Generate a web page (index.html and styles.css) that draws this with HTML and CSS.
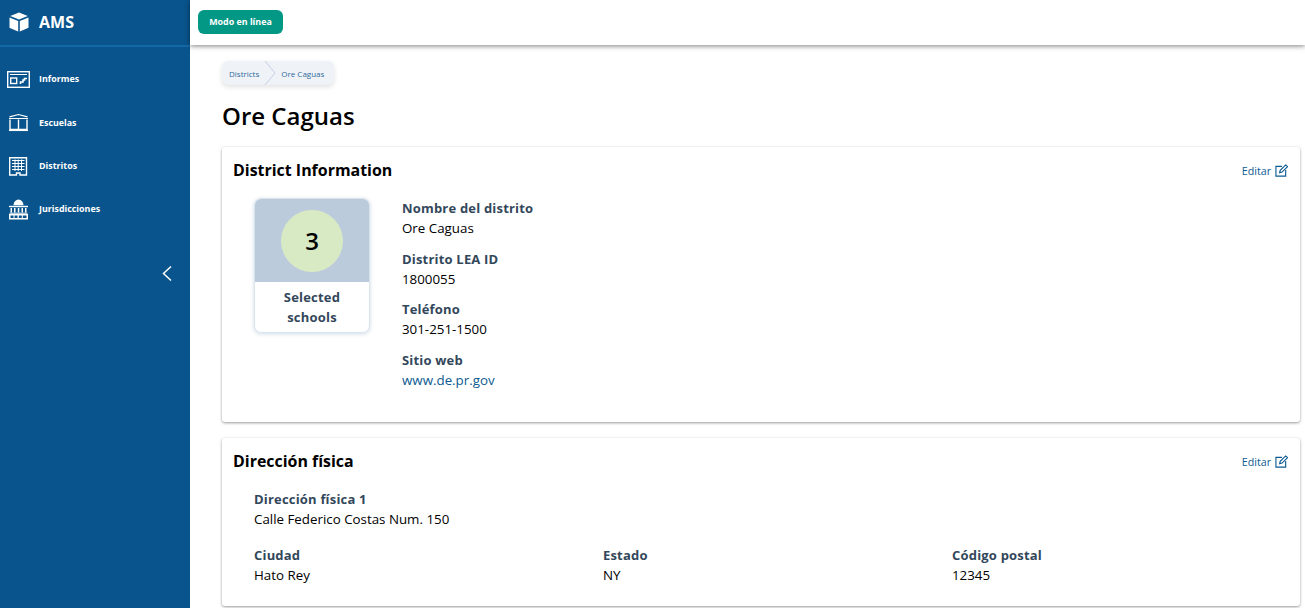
FILE: index.html
```html
<!DOCTYPE html>
<html lang="es">
<head>
<meta charset="utf-8">
<title>AMS</title>
<link rel="stylesheet" href="styles.css">
</head>
<body>
<div class="app">
  <aside class="sidebar">
    <div class="brand">
      <svg class="cube" viewBox="0 0 20 20"><path fill="#fff" d="M10 0.500 18.800 4 10 7.600 1.200 4zM0.500 5.400 9.200 9v10.600L2 16.600 0.500 15.800zM19.500 5.400V15.800L10.800 19.600V9z"/></svg>
      <span class="brand-name">AMS</span>
    </div>
    <nav class="nav">
      <a class="nav-item">
        <svg class="nav-icon" viewBox="0 0 24 20" fill="none" stroke="#fff"><rect x="0.700" y="2.700" width="21.600" height="15.600" stroke-width="1.400"/><path d="M3 5.500H20" stroke-width="1"/><rect x="3.700" y="9" width="6" height="5.500" stroke-width="1.400"/><path d="M13.500 15v-2h2.500v-2h1.500v-1.500h2.500" stroke-width="1.600"/></svg>
        <span>Informes</span>
      </a>
      <a class="nav-item">
        <svg class="nav-icon" viewBox="0 0 24 20" fill="none" stroke="#fff"><path d="M2.500 4.800 11.500 2.500 20.500 4.800" stroke-width="1.200"/><path d="M2 6.500H21" stroke-width="1"/><path d="M3 7.500V17.500H20V7.500M11.500 7.500V17.500" stroke-width="1.400"/><path d="M2 18.300H21" stroke-width="1.500"/></svg>
        <span>Escuelas</span>
      </a>
      <a class="nav-item">
        <svg class="nav-icon" viewBox="0 0 24 20" fill="none" stroke="#fff"><path d="M2.700 1.700H19.500V19H13v-2H9.500v2H2.700z" stroke-width="1.400"/><path d="M5 4.500H17.500M5 7.500H17.500M5 10.500H17.500M5 13.500H17.500" stroke-width="1"/><path d="M8 3.500V15M11.200 3.500V15M14.500 3.500V15" stroke-width="1"/></svg>
        <span>Distritos</span>
      </a>
      <a class="nav-item">
        <svg class="nav-icon" viewBox="0 0 24 20" fill="#fff"><path d="M6.500 6.300a5 5.800 0 0 1 10 0z"/><rect x="2" y="6.800" width="19" height="1.400"/><path d="M3.500 9H5v4.500H3.500zM7 9h1.500v4.500H7zM10.800 9h1.500v4.500h-1.500zM14.500 9H16v4.500h-1.500zM18 9h1.500v4.500H18z"/><rect x="2.500" y="13.700" width="18" height="1"/><path fill-rule="evenodd" d="M2 15h19v5.500H2zM3.500 16.500v2.500h3v-2.500zM7.500 16.500v2.500h3v-2.500zM11.800 16.500v2.500h3v-2.500zM15.800 16.500v2.500h3.700v-2.500z"/></svg>
        <span>Jurisdicciones</span>
      </a>
    </nav>
    <div class="collapse">
      <svg class="chev" viewBox="0 0 10 16" fill="none" stroke="#fff" stroke-width="1.500"><path d="M9 1 1.500 8 9 15"/></svg>
    </div>
  </aside>
  <div class="main">
    <header class="topbar"><button class="mode">Modo en línea</button></header>
    <main class="content">
      <div class="crumbs">
        <a>Districts</a>
        <svg class="crumb-sep" viewBox="0 0 12 24" fill="none" stroke="#c3d0e2"><path d="M1 0 11 12 1 24"/></svg>
        <a>Ore Caguas</a>
      </div>
      <h1 class="title">Ore Caguas</h1>
      <section class="card info-card">
        <div class="card-head">
          <h2>District Information</h2>
          <a class="edit">Editar
            <svg viewBox="0 0 14 14" fill="none" stroke="#0b5a91" stroke-width="1.200"><path d="M7.500 2.500H1v10.500h10.500V6.500"/><path d="M5 9.300l.6-2.500L11.500 1l2 1.800-5.900 5.900z"/></svg>
          </a>
        </div>
        <div class="info-body">
          <div class="stat">
            <div class="stat-top"><div class="circle">3</div></div>
            <div class="stat-label">Selected schools</div>
          </div>
          <dl class="fields">
            <div class="field"><dt>Nombre del distrito</dt><dd>Ore Caguas</dd></div>
            <div class="field"><dt>Distrito LEA ID</dt><dd>1800055</dd></div>
            <div class="field"><dt>Teléfono</dt><dd>301-251-1500</dd></div>
            <div class="field"><dt>Sitio web</dt><dd><a class="link">www.de.pr.gov</a></dd></div>
          </dl>
        </div>
      </section>
      <section class="card addr-card">
        <div class="card-head">
          <h2>Dirección física</h2>
          <a class="edit">Editar
            <svg viewBox="0 0 14 14" fill="none" stroke="#0b5a91" stroke-width="1.200"><path d="M7.500 2.500H1v10.500h10.500V6.500"/><path d="M5 9.300l.6-2.500L11.500 1l2 1.800-5.900 5.900z"/></svg>
          </a>
        </div>
        <div class="addr-body">
          <div class="field"><dt>Dirección física 1</dt><dd>Calle Federico Costas Num. 150</dd></div>
          <div class="addr-grid">
            <div class="field"><dt>Ciudad</dt><dd>Hato Rey</dd></div>
            <div class="field"><dt>Estado</dt><dd>NY</dd></div>
            <div class="field"><dt>Código postal</dt><dd>12345</dd></div>
          </div>
        </div>
      </section>
    </main>
  </div>
</div>
</body>
</html>
```
FILE: styles.css
```css
* { box-sizing: border-box; }
html, body { margin: 0; height: 100%; overflow: hidden; }
body { font-family: "Open Sans", "Noto Sans", sans-serif; color: #000; background: #fff; }
.app { display: flex; height: 608px; }
.sidebar { width: 190px; flex: none; background: #09548c; color: #fff; }
.brand { height: 47px; display: flex; align-items: center; gap: 10px; padding: 0 0 1px 9px; border-bottom: 2px solid #1369a8; }
.cube { width: 20px; height: 20px; }
.brand-name { font-size: 16px; font-weight: 700; }
.nav { padding-top: 10.300px; display: flex; flex-direction: column; }
.nav-item { height: 43.300px; display: flex; align-items: center; gap: 8px; padding-left: 7px; font-size: 8.900px; font-weight: 700; color: #fff; }
.nav-icon { width: 24px; height: 20px; flex: none; overflow: visible; }
.collapse { display: flex; justify-content: flex-end; padding: 35px 18px 0 0; }
.chev { width: 10px; height: 17px; }
.main { flex: 1; min-width: 0; display: flex; flex-direction: column; }
.topbar { height: 45px; flex: none; display: flex; align-items: flex-start; padding: 10px 8px; background: #fff; box-shadow: 0 1px 5px rgba(0,0,0,.5); position: relative; }
.mode { width: 85px; height: 24px; border: 0; border-radius: 6px; background: #039885; color: #fff; font: 700 8.900px "Open Sans", sans-serif; padding: 0 0 2px; }
.content { padding: 16px 5px 0 32px; }
.crumbs { display: flex; width: fit-content; align-items: center; height: 24px; padding: 0 10px 0 7px; border-radius: 6px; background: #eff3f8; box-shadow: 0 2px 5px rgba(0,0,0,.12); font-size: 8px; color: #2f6a9b; }
.crumb-sep { width: 12px; height: 24px; margin: 0 5px; }
.title { margin: 14px 0 15px; font-size: 24px; line-height: 33px; font-weight: 600; }
.card { background: #fff; border-radius: 3px; box-shadow: 0 1px 3px rgba(0,0,0,.4); }
.info-card { height: 275px; margin-bottom: 16px; }
.addr-card { height: 168px; }
.card-head { display: flex; justify-content: space-between; align-items: center; padding: 11px 12px 0 11px; height: 38px; }
.card-head h2 { margin: -4px 0 0; font-size: 15.950px; font-weight: 700; line-height: 22px; }
.edit { display: flex; align-items: center; gap: 4px; margin-top: -2px; font-size: 10.670px; color: #0b5a91; }
.edit svg { width: 13px; height: 13px; }
.info-body { display: flex; padding: 13px 0 0 32px; gap: 32px; }
.stat { width: 116px; height: 135px; border: 1px solid #dbe3ed; border-radius: 7px; overflow: hidden; background: #fff; box-shadow: 0 1px 4px rgba(9,84,140,.2); }
.stat-top { height: 83px; background: #bccbdc; display: flex; align-items: center; justify-content: center; }
.circle { width: 62px; height: 62px; border-radius: 50%; background: #d8eac4; display: flex; align-items: center; justify-content: center; font-size: 24px; font-weight: 600; line-height: 1; }
.stat-label { padding: 5px 21px 0; text-align: center; font-size: 13px; letter-spacing: .2px; line-height: 20px; font-weight: 700; color: #33475b; }
.fields { margin: 0; padding-top: .3px; display: flex; flex-direction: column; gap: 10.500px; }
.field { margin: 0; }
dt { font-size: 13px; letter-spacing: .19px; line-height: 20px; font-weight: 700; color: #33475b; }
dd { margin: 0; font-size: 13.330px; line-height: 20px; color: #000; }
.link { color: #0b5a91; }
.addr-body { padding: 13px 32px 0; display: flex; flex-direction: column; gap: 16px; }
.addr-grid { display: grid; grid-template-columns: 349px 349px 1fr; }
```
